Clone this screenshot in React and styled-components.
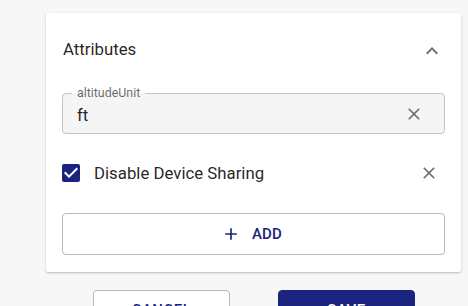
import styled, { createGlobalStyle } from 'styled-components';

const GlobalStyle = createGlobalStyle`
  body {
    margin: 0;
    background: #f7f7f7;
    font-family: Roboto, "Liberation Sans", sans-serif;
    color: rgba(0, 0, 0, 0.87);
  }
`;

const Page = styled.div`
  width: 468px;
  height: 306px;
  overflow: hidden;
  padding: 13px 0 0 46px;
  box-sizing: border-box;
`;

const Card = styled.section`
  width: 415px;
  box-sizing: border-box;
  background: #fff;
  padding: 18px 16px 17px 16px;
  box-shadow: 0 1px 3px rgba(0, 0, 0, 0.18), 0 1px 1px rgba(0, 0, 0, 0.08);
  border-radius: 2px;
`;

const Header = styled.div`
  display: flex;
  align-items: center;
  justify-content: space-between;
  height: 36px;
  padding-left: 1px;
`;

const Title = styled.h2`
  margin: 0;
  font-size: 16.8px;
  font-weight: 400;
  line-height: 24px;
`;

const IconButton = styled.button`
  display: flex;
  align-items: center;
  justify-content: center;
  border: none;
  background: none;
  padding: 0;
  width: ${(p) => p.size || 24}px;
  height: ${(p) => p.size || 24}px;
  color: #707070;
  margin-right: ${(p) => p.offset || 0}px;
  cursor: pointer;
`;

const Chevron = styled(IconButton)`
  margin-top: 3px;
`;

const Field = styled.fieldset`
  position: relative;
  margin: 26px 0 0 0;
  height: 41px;
  box-sizing: border-box;
  border: 1px solid #c4c4c4;
  border-radius: 4px;
  background: #f5f5f5;
  padding: 0 20px 0 14px;
  display: flex;
  align-items: center;
`;

const FieldLabel = styled.legend`
  position: absolute;
  top: -8px;
  left: 9px;
  padding: 0 5px;
  font-size: 12.4px;
  line-height: 14px;
  color: rgba(0, 0, 0, 0.6);
  background: linear-gradient(#fff 50%, #f5f5f5 50%);
`;

const FieldValue = styled.span`
  flex: 1;
  font-size: 16.8px;
  line-height: 20px;
  padding-top: 2px;
`;

const CheckRow = styled.div`
  display: flex;
  align-items: center;
  height: 40px;
  margin-top: 19px;
`;

const CheckBoxWrap = styled(IconButton)`
  margin-left: -3px;
`;

const CheckLabel = styled.span`
  flex: 1;
  font-size: 16.8px;
  margin-left: 11px;
`;

const AddButton = styled.button`
  display: flex;
  align-items: center;
  justify-content: center;
  gap: 11px;
  width: 100%;
  height: 42px;
  margin-top: 20px;
  border: 1px solid #b8b8c4;
  border-radius: 4px;
  background: #fff;
  color: #1a237e;
  font-family: Roboto, "Liberation Sans", sans-serif;
  font-size: 15px;
  font-weight: 500;
  letter-spacing: 0.2px;
  padding-right: 10px;
`;

const Actions = styled.div`
  display: flex;
  gap: 48px;
  margin: 18px 0 0 47px;
`;

const ActionButton = styled.button`
  width: 137px;
  height: 40px;
  border-radius: 4px;
  font-family: Roboto, "Liberation Sans", sans-serif;
  font-size: 15px;
  font-weight: 500;
  letter-spacing: 0.5px;
  border: 1px solid ${(p) => (p.primary ? '#1a237e' : '#b8b8c4')};
  background: ${(p) => (p.primary ? '#1a237e' : '#fff')};
  color: ${(p) => (p.primary ? '#fff' : '#1a237e')};
`;

const ChevronUp = () => (
  <svg width="24" height="24" viewBox="0 0 24 24" fill="currentColor">
    <path d="M12 8l-6 6 1.41 1.41L12 10.83l4.59 4.58L18 14z" />
  </svg>
);

const ClearIcon = ({ size = 20 }) => (
  <svg width={size} height={size} viewBox="0 0 24 24" fill="currentColor">
    <path d="M19 6.41L17.59 5 12 10.59 6.41 5 5 6.41 10.59 12 5 17.59 6.41 19 12 13.41 17.59 19 19 17.59 13.41 12z" />
  </svg>
);

const CheckedBox = () => (
  <svg width="24" height="24" viewBox="0 0 24 24" fill="#1a237e">
    <path d="M19 3H5c-1.11 0-2 .9-2 2v14c0 1.1.89 2 2 2h14c1.11 0 2-.9 2-2V5c0-1.1-.89-2-2-2zm-9 14l-5-5 1.41-1.41L10 14.17l7.59-7.59L19 8l-9 9z" />
  </svg>
);

const PlusIcon = () => (
  <svg width="20" height="20" viewBox="0 0 24 24" fill="currentColor">
    <path d="M19 13h-6v6h-2v-6H5v-2h6V5h2v6h6v2z" />
  </svg>
);

export default function App() {
  return (
    <Page>
      <GlobalStyle />
      <Card>
        <Header>
          <Title>Attributes</Title>
          <Chevron offset={1}>
            <ChevronUp />
          </Chevron>
        </Header>

        <Field>
          <FieldLabel>altitudeUnit</FieldLabel>
          <FieldValue>ft</FieldValue>
          <IconButton size={20}>
            <ClearIcon />
          </IconButton>
        </Field>

        <CheckRow>
          <CheckBoxWrap>
            <CheckedBox />
          </CheckBoxWrap>
          <CheckLabel>Disable Device Sharing</CheckLabel>
          <IconButton size={20} offset={6}>
            <ClearIcon />
          </IconButton>
        </CheckRow>

        <AddButton>
          <PlusIcon />
          ADD
        </AddButton>
      </Card>
      <Actions>
        <ActionButton>CANCEL</ActionButton>
        <ActionButton primary>SAVE</ActionButton>
      </Actions>
    </Page>
  );
}
